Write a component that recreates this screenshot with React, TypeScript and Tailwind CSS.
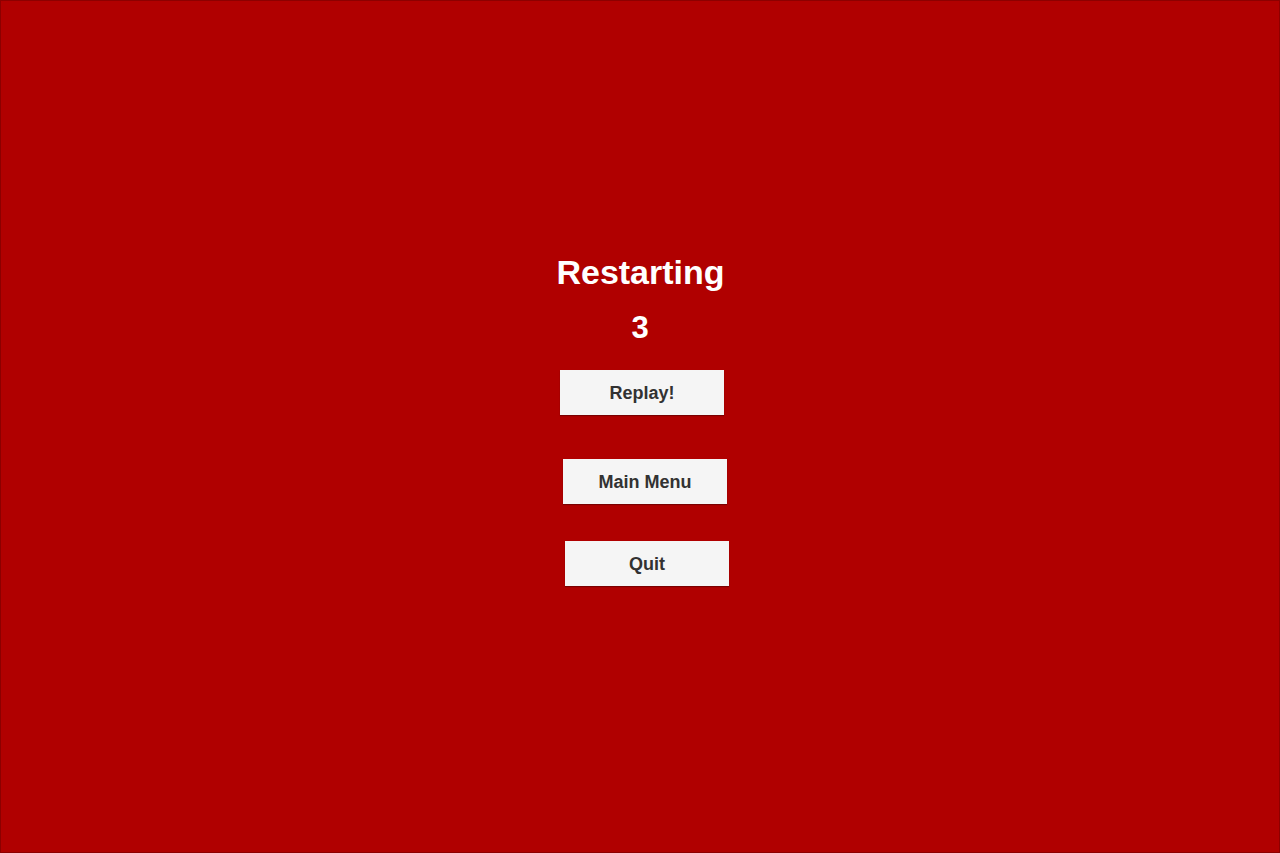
export default function App() {
  const font = { fontFamily: '"Liberation Sans", Arial, sans-serif' }
  return (
    <div
      className="w-[1280px] h-[853px] bg-[#b00000] border border-[#8c0000] flex flex-col items-center pt-[254px]"
      style={font}
    >
      <h1 className="text-[34px] leading-[34px] font-bold text-white ml-[1px]">Restarting</h1>
      <div className="mt-[23px] text-[31px] leading-[31px] font-bold text-white">3</div>
      <button className="mt-[27px] ml-[4px] w-[164px] h-[45px] pt-[2px] bg-[#f5f5f5] text-[#323232] text-[18px] font-bold shadow-[0_1px_1px_rgba(0,0,0,0.3)]">
        Replay!
      </button>
      <button className="mt-[44px] ml-[10px] w-[164px] h-[45px] pt-[2px] bg-[#f5f5f5] text-[#323232] text-[18px] font-bold shadow-[0_1px_1px_rgba(0,0,0,0.3)]">
        Main Menu
      </button>
      <button className="mt-[37px] ml-[14px] w-[164px] h-[45px] pt-[2px] bg-[#f5f5f5] text-[#323232] text-[18px] font-bold shadow-[0_1px_1px_rgba(0,0,0,0.3)]">
        Quit
      </button>
    </div>
  )
}
